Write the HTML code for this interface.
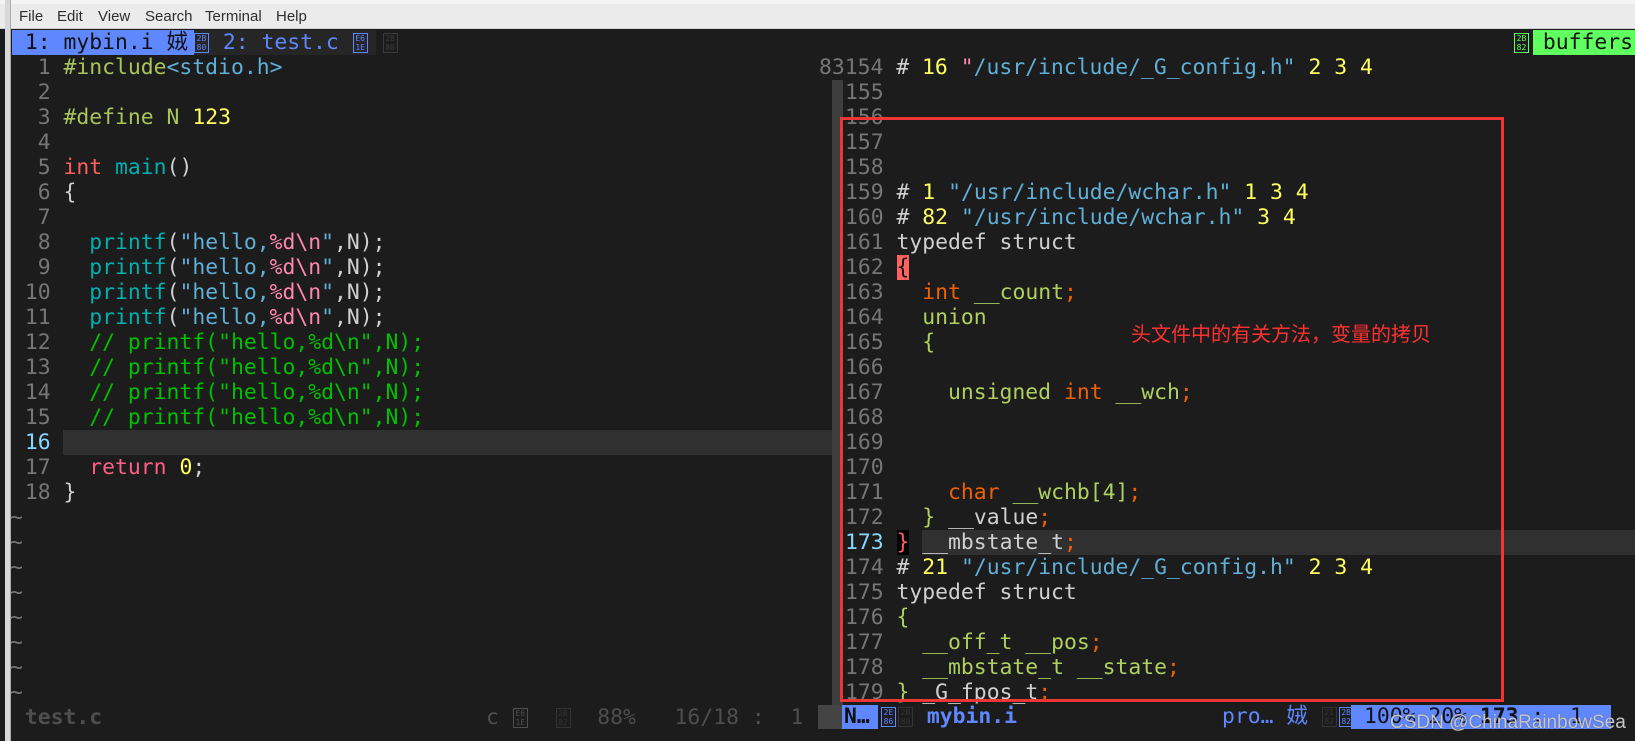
<!DOCTYPE html>
<html><head><meta charset="utf-8"><style>
*{margin:0;padding:0;box-sizing:border-box}
body{width:1635px;height:741px;background:#1c1c1c;overflow:hidden;position:relative;font-family:"DejaVu Sans Mono","Liberation Mono","Noto Sans CJK SC",monospace;font-size:21.4px;}
.menu{position:absolute;left:0;top:0;width:1635px;height:29px;background:#ebebeb;border-top:4px solid #f4f4f4;border-bottom:1px solid #cfcfcf;font-family:"Liberation Sans",sans-serif;font-size:15px;color:#2e2e2e}
.menu span{position:absolute;top:4px}
.frame{position:absolute;left:5px;top:0;width:6px;height:741px;background:#d8d8d8;border-right:1px solid #aaa}
.r{position:absolute;height:25px;line-height:25px;white-space:pre}
.n{color:#767676}.cn{color:#87d7ff}
.pp{color:#a8c45a}.s{color:#5fafd7}.sp{color:#ff87af}.y{color:#ffff5f}.red{color:#ff5f5f}.t{color:#00afaf}.w{color:#d0d0d0}.c{color:#00c000}.ret{color:#ff5f87}
.o{color:#f06000}.g{color:#afcf5f}
.box{display:inline-block;width:15px;height:20px;border:1px solid currentColor;font-size:8px;line-height:9px;text-align:center;vertical-align:middle;margin:0 1px}
.st{color:#4e4e4e}
</style></head><body>
<div class="menu"><span style="left:19px">File</span><span style="left:57px">Edit</span><span style="left:98px">View</span><span style="left:145px">Search</span><span style="left:205px">Terminal</span><span style="left:276px">Help</span></div>
<div class="frame"></div>
<div style="position:absolute;left:12px;top:30px;width:182px;height:25px;background:#5f87ff"></div>
<div style="position:absolute;left:194px;top:30px;width:182px;height:25px;background:#262626"></div>
<div class="r" style="left:12px;top:30px;color:#111"> 1: mybin.i 娀</div>
<div class="r" style="left:193px;top:30px;color:#5f87ff"><span class="box">2B<br>80</span> 2: test.c <span class="box">E6<br>1E</span> <span class="box" style="color:#3a3a3a">2B<br>80</span></div>
<div style="position:absolute;left:1533px;top:30px;width:102px;height:25px;background:#5fff5f"></div>
<div class="r" style="left:1513px;top:30px;color:#111"><span class="box" style="color:#5fff5f">2B<br>82</span> buffers</div>
<div style="position:absolute;left:63px;top:430px;width:770px;height:25px;background:#303030"></div>
<div class="r" style="left:12px;top:55px"><span class="n">  1 </span><span class="pp">#include</span><span class="s">&lt;stdio.h&gt;</span></div>
<div class="r" style="left:12px;top:80px"><span class="n">  2 </span></div>
<div class="r" style="left:12px;top:105px"><span class="n">  3 </span><span class="pp">#define N </span><span class="y">123</span></div>
<div class="r" style="left:12px;top:130px"><span class="n">  4 </span></div>
<div class="r" style="left:12px;top:155px"><span class="n">  5 </span><span class="red">int</span> <span class="t">main</span><span class="w">()</span></div>
<div class="r" style="left:12px;top:180px"><span class="n">  6 </span><span class="w">{</span></div>
<div class="r" style="left:12px;top:205px"><span class="n">  7 </span></div>
<div class="r" style="left:12px;top:230px"><span class="n">  8 </span>  <span class="t">printf</span><span class="w">(</span><span class="s">"hello,</span><span class="sp">%d\n</span><span class="s">"</span><span class="w">,N);</span></div>
<div class="r" style="left:12px;top:255px"><span class="n">  9 </span>  <span class="t">printf</span><span class="w">(</span><span class="s">"hello,</span><span class="sp">%d\n</span><span class="s">"</span><span class="w">,N);</span></div>
<div class="r" style="left:12px;top:280px"><span class="n"> 10 </span>  <span class="t">printf</span><span class="w">(</span><span class="s">"hello,</span><span class="sp">%d\n</span><span class="s">"</span><span class="w">,N);</span></div>
<div class="r" style="left:12px;top:305px"><span class="n"> 11 </span>  <span class="t">printf</span><span class="w">(</span><span class="s">"hello,</span><span class="sp">%d\n</span><span class="s">"</span><span class="w">,N);</span></div>
<div class="r" style="left:12px;top:330px"><span class="n"> 12 </span>  <span class="c">// printf("hello,%d\n",N);</span></div>
<div class="r" style="left:12px;top:355px"><span class="n"> 13 </span>  <span class="c">// printf("hello,%d\n",N);</span></div>
<div class="r" style="left:12px;top:380px"><span class="n"> 14 </span>  <span class="c">// printf("hello,%d\n",N);</span></div>
<div class="r" style="left:12px;top:405px"><span class="n"> 15 </span>  <span class="c">// printf("hello,%d\n",N);</span></div>
<div class="r" style="left:12px;top:430px"><span class="cn"> 16 </span></div>
<div class="r" style="left:12px;top:455px"><span class="n"> 17 </span>  <span class="ret">return</span> <span class="y">0</span><span class="w">;</span></div>
<div class="r" style="left:12px;top:480px"><span class="n"> 18 </span><span class="w">}</span></div>
<div class="r n" style="left:10px;top:505px">~</div>
<div class="r n" style="left:10px;top:530px">~</div>
<div class="r n" style="left:10px;top:555px">~</div>
<div class="r n" style="left:10px;top:580px">~</div>
<div class="r n" style="left:10px;top:605px">~</div>
<div class="r n" style="left:10px;top:630px">~</div>
<div class="r n" style="left:10px;top:655px">~</div>
<div class="r n" style="left:10px;top:680px">~</div>
<div style="position:absolute;left:832px;top:80px;width:11px;height:625px;background:#3e3e3e"></div>
<div style="position:absolute;left:922px;top:530px;width:713px;height:25px;background:#303030"></div>
<div class="r" style="left:819px;top:55px"><span class="n">83154 </span><span class="w"># </span><span class="y">16</span> <span class="sp">"</span><span class="s">/usr/include/_G_config.h"</span> <span class="y">2 3 4</span></div>
<div class="r n" style="left:845px;top:80px">155</div>
<div class="r n" style="left:845px;top:105px">156</div>
<div class="r n" style="left:845px;top:130px">157</div>
<div class="r n" style="left:845px;top:155px">158</div>
<div class="r" style="left:845px;top:180px"><span class="n">159 </span><span class="w"># </span><span class="y">1</span> <span class="s">"/usr/include/wchar.h"</span> <span class="y">1 3 4</span></div>
<div class="r" style="left:845px;top:205px"><span class="n">160 </span><span class="w"># </span><span class="y">82</span> <span class="s">"/usr/include/wchar.h"</span> <span class="y">3 4</span></div>
<div class="r" style="left:845px;top:230px"><span class="n">161 </span><span class="w">typedef struct</span></div>
<div class="r" style="left:845px;top:255px"><span class="n">162 </span><span style="background:#ff6060;color:#111">{</span></div>
<div class="r" style="left:845px;top:280px"><span class="n">163 </span>  <span class="o">int</span> <span class="g">__count</span><span class="o">;</span></div>
<div class="r" style="left:845px;top:305px"><span class="n">164 </span>  <span class="g">union</span></div>
<div class="r" style="left:845px;top:330px"><span class="n">165 </span>  <span class="g">{</span></div>
<div class="r n" style="left:845px;top:355px">166</div>
<div class="r" style="left:845px;top:380px"><span class="n">167 </span>    <span class="g">unsigned</span> <span class="o">int</span> <span class="g">__wch</span><span class="o">;</span></div>
<div class="r n" style="left:845px;top:405px">168</div>
<div class="r n" style="left:845px;top:430px">169</div>
<div class="r n" style="left:845px;top:455px">170</div>
<div class="r" style="left:845px;top:480px"><span class="n">171 </span>    <span class="o">char</span> <span class="g">__wchb[4]</span><span class="o">;</span></div>
<div class="r" style="left:845px;top:505px"><span class="n">172 </span>  <span class="g">}</span> <span class="w">__value</span><span class="o">;</span></div>
<div class="r" style="left:845px;top:530px"><span class="cn">173 </span><span style="background:#000;color:#ff5f5f">}</span> <span class="w">__mbstate_t</span><span class="o">;</span></div>
<div class="r" style="left:845px;top:555px"><span class="n">174 </span><span class="w"># </span><span class="y">21</span> <span class="s">"/usr/include/_G_config.h"</span> <span class="y">2 3 4</span></div>
<div class="r" style="left:845px;top:580px"><span class="n">175 </span><span class="w">typedef struct</span></div>
<div class="r" style="left:845px;top:605px"><span class="n">176 </span><span class="g">{</span></div>
<div class="r" style="left:845px;top:630px"><span class="n">177 </span>  <span class="g">__off_t __pos</span><span class="o">;</span></div>
<div class="r" style="left:845px;top:655px"><span class="n">178 </span>  <span class="g">__mbstate_t __state</span><span class="o">;</span></div>
<div class="r" style="left:845px;top:680px"><span class="n">179 </span><span class="g">}</span> <span class="w">_G_fpos_t</span><span class="o">;</span></div>
<div style="position:absolute;left:840px;top:117px;width:664px;height:585px;border:3px solid #f03535"></div>
<div style="position:absolute;left:1131px;top:318px;font-family:'Noto Sans CJK SC',sans-serif;font-size:20px;color:#ff3030;white-space:nowrap">头文件中的有关方法，变量的拷贝</div>
<div class="r st" style="left:12px;top:705px;font-weight:bold"> test.c</div>
<div class="r st" style="left:486px;top:705px">c <span class="box">E6<br>1E</span>  <span class="box" style="color:#333">2B<br>82</span>  88%   16/18 :  1</div>
<div style="position:absolute;left:818px;top:705px;width:24px;height:24px;background:#444"></div>
<div style="position:absolute;left:842px;top:705px;width:36px;height:24px;background:#5f87ff"></div>
<div class="r" style="left:844px;top:704px;color:#111;font-weight:bold">N…</div>
<div class="r" style="left:880px;top:704px;color:#5f87ff"><span class="box">2E<br>86</span><span class="box" style="color:#333">2B<br>80</span> <b>mybin.i</b></div>
<div class="r" style="left:1222px;top:704px;color:#5f87ff">pro… 娀 <span class="box" style="color:#333">21<br>82</span><span class="box">2B<br>82</span></div>
<div style="position:absolute;left:1351px;top:705px;width:260px;height:24px;background:#5f87ff"></div>
<div class="r" style="left:1364px;top:704px;color:#111">100% 20% <b>173</b> :  1</div>
<div style="position:absolute;left:1390px;top:712px;font-family:'Liberation Sans',sans-serif;font-size:19px;color:rgba(225,225,225,0.85);white-space:nowrap;text-shadow:0 0 1px #333">CSDN @ChinaRainbowSea</div>
</body></html>
